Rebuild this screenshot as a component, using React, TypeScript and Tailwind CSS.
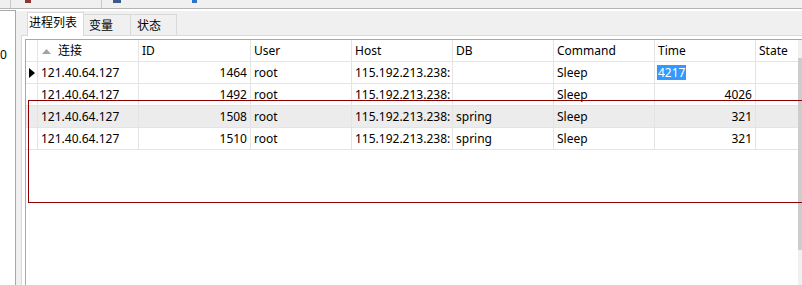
import React from "react";

const GRID =
  "grid grid-cols-[12px_101px_112px_101px_101px_101px_101px_101px_42px]";

type Row = {
  conn: string;
  id: string;
  user: string;
  host: string;
  db: string;
  cmd: string;
  time: string;
  cur?: boolean;
  shade?: boolean;
  edit?: boolean;
};

const rows: Row[] = [
  { conn: "121.40.64.127", id: "1464", user: "root", host: "115.192.213.238:", db: "", cmd: "Sleep", time: "4217", cur: true, edit: true },
  { conn: "121.40.64.127", id: "1492", user: "root", host: "115.192.213.238:", db: "", cmd: "Sleep", time: "4026" },
  { conn: "121.40.64.127", id: "1508", user: "root", host: "115.192.213.238:", db: "spring", cmd: "Sleep", time: "321", shade: true },
  { conn: "121.40.64.127", id: "1510", user: "root", host: "115.192.213.238:", db: "spring", cmd: "Sleep", time: "321" },
];

const cell =
  "h-[22px] border-r border-b border-[#e4e4e4] overflow-hidden whitespace-nowrap flex items-center px-[3px]";
const lastCell =
  "h-[22px] border-b border-[#e4e4e4] overflow-hidden whitespace-nowrap flex items-center px-[3px]";

function Header() {
  return (
    <div className={GRID}>
      <div className={cell} />
      <div className={cell}>
        <svg width="9" height="5" viewBox="0 0 9 5" className="ml-[1px] mr-[7px] mt-[1px] shrink-0">
          <polygon points="0,5 4.5,0 9,5" fill="#a3a3a3" />
        </svg>
        <span>连接</span>
      </div>
      <div className={cell}>ID</div>
      <div className={cell}>User</div>
      <div className={cell}>Host</div>
      <div className={cell}>DB</div>
      <div className={cell}>Command</div>
      <div className={cell}>Time</div>
      <div className={lastCell}>State</div>
    </div>
  );
}

function DataRow({ r }: { r: Row }) {
  return (
    <div className={`${GRID} ${r.shade ? "bg-[#ececec]" : "bg-white"}`}>
      <div className={cell + " !px-0"}>
        {r.cur && (
          <svg width="6" height="10" viewBox="0 0 6 10" className="ml-[3px]">
            <polygon points="0,0 6,5 0,10" fill="#000" />
          </svg>
        )}
      </div>
      <div className={cell}>{r.conn}</div>
      <div className={cell + " justify-end"}>{r.id}</div>
      <div className={cell}>{r.user}</div>
      <div className={cell}>{r.host}</div>
      <div className={cell}>{r.db}</div>
      <div className={cell}>{r.cmd}</div>
      {r.edit ? (
        <div className={cell + " !pl-[2px]"}>
          <span className="bg-[#3399ff] text-white px-[1px] leading-[15px]">{r.time}</span>
        </div>
      ) : (
        <div className={cell + " justify-end"}>{r.time}</div>
      )}
      <div className={lastCell} />
    </div>
  );
}

export default function App() {
  return (
    <div className="relative w-[802px] h-[285px] overflow-hidden bg-[#f0f0f0] text-[12px] text-black font-['Noto_Sans','Noto_Sans_CJK_SC',sans-serif] flex flex-col">
      {/* toolbar remnant */}
      <div className="h-[9px] shrink-0 border-b border-[#b4b4b4] flex">
        <div className="w-[11px] border-r border-[#c8c8c8]" />
        <div className="w-[91px] border-r border-[#c8c8c8] flex">
          <svg width="6" height="3" className="ml-[14px]">
            <rect width="6" height="3" fill="#8e3434" />
          </svg>
        </div>
        <div className="flex">
          <svg width="8" height="3" className="ml-[11px]">
            <rect width="8" height="3" fill="#3a5a8e" />
          </svg>
          <svg width="5" height="3" className="ml-[71px]">
            <rect width="5" height="3" fill="#2f73c9" />
          </svg>
        </div>
      </div>
      <div className="h-[1px] shrink-0 bg-white" />

      <div className="flex flex-1 min-h-0">
        {/* left panel */}
        <div className="w-[16px] shrink-0 bg-white border-t border-r border-[#a8a8a8] pt-[36px] leading-[16px] overflow-hidden">
          0
        </div>
        {/* splitter */}
        <div className="w-[5px] shrink-0 bg-[#f0f0f0] border-t border-white" />
        {/* tab control */}
        <div className="flex-1 flex flex-col border-t border-white min-w-0">
          <div className="h-[25px] shrink-0 flex items-end pl-[6px] border-b border-[#d9d9d9]">
            <div className="relative z-10 -mb-px w-[57px] h-[24px] bg-white border border-b-0 border-[#d9d9d9] pl-[1px] pt-[2px] leading-[16px]">
              进程列表
            </div>
            <div className="w-[47px] h-[21px] border-t border-r border-[#d9d9d9] flex items-center pl-[5px] pt-[1px]">
              变量
            </div>
            <div className="w-[46px] h-[21px] border-t border-r border-[#d9d9d9] flex items-center pl-[6px] pt-[1px]">
              状态
            </div>
          </div>
          <div className="flex-1 bg-white border-l border-[#d9d9d9] pl-[3px] pt-[3px] min-h-0">
            <div className="h-full flex border-l border-t border-[#a8a8a8]">
              <div className="flex-1 min-w-0 bg-white">
                <Header />
                {rows.map((r) => (
                  <DataRow key={r.id} r={r} />
                ))}
              </div>
              <div className="w-[4px] shrink-0 flex flex-col bg-[#f0f0f0]">
                <div className="h-[18px]" />
                <div className="h-[192px] bg-[#cdcdcd]" />
              </div>
            </div>
          </div>
        </div>
      </div>

      {/* red annotation frame */}
      <div className="absolute left-[28px] top-[100px] w-[800px] h-[103px] border border-[#8b0000] pointer-events-none" />
    </div>
  );
}
